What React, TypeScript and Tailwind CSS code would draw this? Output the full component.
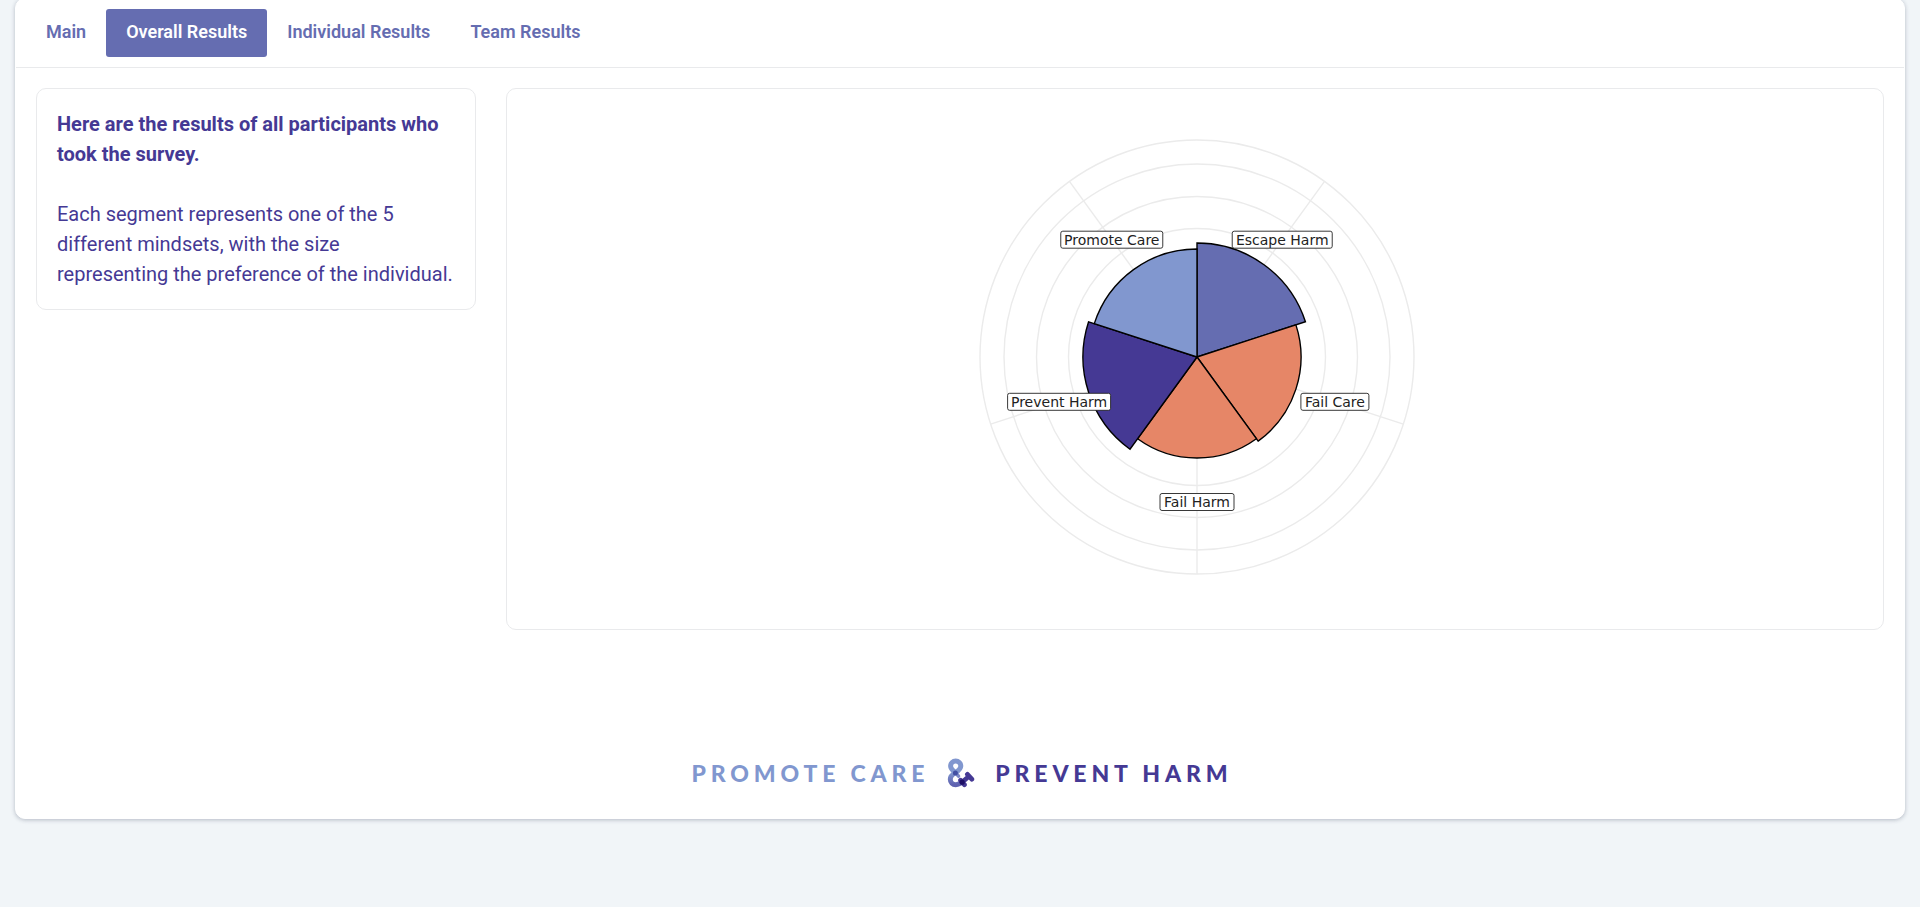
import { useState } from "react";
import clsx from "clsx";

const TABS = ["Main", "Overall Results", "Individual Results", "Team Results"];

type Segment = {
  label: string;
  radius: number;
  fill: string;
  labelWidth: number;
};

const SEGMENTS: Segment[] = [
  { label: "Escape Harm", radius: 114, fill: "#656db1", labelWidth: 100 },
  { label: "Fail Care", radius: 104, fill: "#e68667", labelWidth: 68 },
  { label: "Fail Harm", radius: 101, fill: "#e68667", labelWidth: 74 },
  { label: "Prevent Harm", radius: 114, fill: "#453994", labelWidth: 103 },
  { label: "Promote Care", radius: 108, fill: "#8197cf", labelWidth: 102 },
];

const CX = 252;
const CY = 248;
const GRID_RADII = [32, 64, 96, 128.5, 160.5, 193, 217];
const OUTER = 217;
const LABEL_RADIUS = 145;

// 0deg is twelve o'clock, clockwise
function polar(deg: number, r: number) {
  const rad = (deg * Math.PI) / 180;
  return { x: CX + r * Math.sin(rad), y: CY - r * Math.cos(rad) };
}

function wedge(start: number, end: number, r: number) {
  const a = polar(start, r);
  const b = polar(end, r);
  return `M${CX} ${CY}L${a.x} ${a.y}A${r} ${r} 0 0 1 ${b.x} ${b.y}Z`;
}

function MindsetChart() {
  const step = 360 / SEGMENTS.length;
  return (
    <svg viewBox="0 0 500 500" className="w-[500px] max-w-full" role="img" aria-label="Mindset preferences">
      <g fill="none" stroke="#ebebeb" strokeWidth="1.4">
        {GRID_RADII.map((r) => (
          <circle key={r} cx={CX} cy={CY} r={r} />
        ))}
        {SEGMENTS.map((s, i) => {
          const p = polar((i + 0.5) * step, OUTER);
          return <line key={s.label} x1={CX} y1={CY} x2={p.x} y2={p.y} />;
        })}
      </g>
      <g stroke="#000" strokeWidth="1.4">
        {SEGMENTS.map((s, i) => (
          <path key={s.label} d={wedge(i * step, (i + 1) * step, s.radius)} fill={s.fill} />
        ))}
      </g>
      {SEGMENTS.map((s, i) => {
        const p = polar((i + 0.5) * step, LABEL_RADIUS);
        return (
          <g key={s.label}>
            <rect
              x={p.x - s.labelWidth / 2}
              y={p.y - 8.5}
              width={s.labelWidth}
              height="17"
              rx="2"
              fill="#fff"
              stroke="#222"
              strokeWidth="0.9"
            />
            <text
              x={p.x}
              y={p.y + 5}
              textAnchor="middle"
              fill="#222"
              className="font-['DejaVu_Sans',sans-serif] text-[14px]"
            >
              {s.label}
            </text>
          </g>
        );
      })}
    </svg>
  );
}

function Ampersand() {
  return (
    <svg viewBox="0 0 28 30" className="h-[30px] w-[28px]" aria-hidden="true">
      <defs>
        <linearGradient id="loop" x1="0" y1="0" x2="0" y2="1">
          <stop offset="0.5" stopColor="#8197cf" />
          <stop offset="1" stopColor="#5f62b0" />
        </linearGradient>
      </defs>
      <g fill="none" strokeLinecap="round" strokeLinejoin="round">
        <path
          d="M8.5 14.6C5.6 12.6 3.6 11 3.6 8A5.1 5.1 0 0 1 13.8 8C13.8 11 11.6 12.6 8.5 14.6C5 16.6 3.3 18.4 3.3 21.2C3.3 24.6 5.6 26.7 8.8 26.7C12 26.7 13.8 25.4 15.6 23.6"
          stroke="url(#loop)"
          strokeWidth="5"
        />
        <path d="M8.5 14.6L11.5 18.2" stroke="#7b87c6" strokeWidth="3.6" />
        <path d="M15.4 24L22 18.2M20.4 16.4L24.8 21.2M13.6 22.4L17.4 26.6" stroke="#453994" strokeWidth="4.8" />
      </g>
      <circle cx="8.4" cy="15" r="2.5" fill="#4350a3" />
      <circle cx="15.2" cy="24.2" r="2.6" fill="#1d0f66" />
    </svg>
  );
}

function Wordmark() {
  return (
    <div className="flex items-center justify-center pl-1 font-['Lato',sans-serif] text-[23px] leading-[30px] font-black tracking-[0.21em]">
      <span className="text-[#8197cf]">PROMOTE CARE</span>
      <span className="mr-5 ml-[18px]">
        <Ampersand />
      </span>
      <span className="text-[#453994]">PREVENT HARM</span>
    </div>
  );
}

export default function App() {
  const [active, setActive] = useState("Overall Results");

  return (
    <div className="min-h-screen bg-[#f1f5f8] px-[15px] font-['Roboto',sans-serif]">
      <main className="-mt-0.5 rounded-[10px] border border-white bg-white shadow-[0_1px_4px_rgba(40,50,80,0.3)]">
        <nav className="flex border-b border-[#e9eaec] px-2.5 py-2.5">
          {TABS.map((tab) => (
            <button
              key={tab}
              type="button"
              onClick={() => setActive(tab)}
              className={clsx(
                "h-12 rounded-[3px] px-5 pb-0.5 text-lg font-semibold",
                tab === active ? "bg-[#656db1] text-white" : "text-[#656db1]",
              )}
            >
              {tab}
            </button>
          ))}
        </nav>

        <div className="grid grid-cols-4 items-start gap-[30px] p-5">
          <section className="rounded-[10px] border border-[#e9eaec] p-5 text-xl leading-[30px] text-[#453994]">
            <p className="font-bold">Here are the results of all participants who took the survey.</p>
            <p className="mt-[30px]">
              Each segment represents one of the 5 different mindsets, with the size representing the preference of
              the individual.
            </p>
          </section>
          <section className="col-span-3 flex justify-center rounded-[10px] border border-[#e9eaec] p-5">
            <MindsetChart />
          </section>
        </div>

        <footer className="pt-[108px] pb-[30px]">
          <Wordmark />
        </footer>
      </main>
    </div>
  );
}
